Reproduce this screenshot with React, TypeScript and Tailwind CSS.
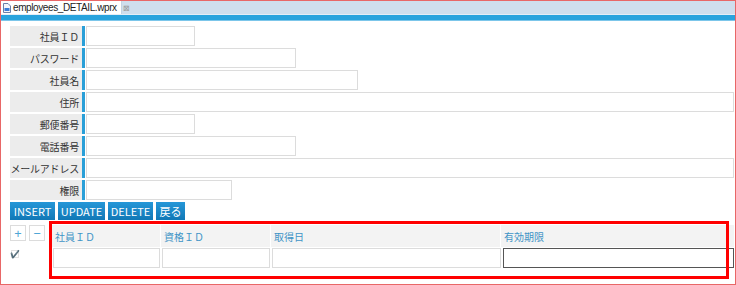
const jp = { fontFamily: '"Noto Sans CJK JP", "Noto Sans", sans-serif' }

const fields = [
  { label: '社員ＩＤ', w: 'w-[109px]' },
  { label: 'パスワード', w: 'w-[210px]' },
  { label: '社員名', w: 'w-[272px]' },
  { label: '住所', w: 'flex-1' },
  { label: '郵便番号', w: 'w-[109px]' },
  { label: '電話番号', w: 'w-[210px]' },
  { label: 'メールアドレス', w: 'flex-1' },
  { label: '権限', w: 'w-[146px]' },
]

function Field({ label, w }: { label: string; w: string }) {
  return (
    <div className="flex h-[20px]">
      <div className="w-[72px] bg-[#ececec] flex items-center justify-end pr-[3px] text-[10px] text-[#333] whitespace-nowrap tracking-[-0.2px]" style={jp}>
        {label}
      </div>
      <div className="w-[3px] bg-[#2a9fd8]" />
      <div className={`${w} ml-[1px] border border-[#dcdcdc] bg-white`} />
    </div>
  )
}

function Btn({ children, w }: { children: string; w: string }) {
  return (
    <div className={`${w} h-[18px] bg-gradient-to-b from-[#2597d8] to-[#1178b6] text-white text-[11px] flex items-center justify-center`} style={jp}>
      {children}
    </div>
  )
}

export default function App() {
  return (
    <div className="relative w-[736px] h-[285px] border border-[#e86767] bg-white overflow-hidden">
      <div className="flex h-[13px] bg-[#cfdeed]">
        <div className="w-[121px] bg-white flex items-center pl-[2px] border-r border-[#c4d3e2]">
          <svg width="8" height="10" viewBox="0 0 8 10" className="mr-[2px] shrink-0">
            <path d="M0.5 0.5h4.5l2.5 2.5v6.5h-7z" fill="#f4f6fb" stroke="#6b7fa8" />
            <rect x="1.5" y="5" width="5" height="3" fill="#3b7dd8" />
          </svg>
          <span className="text-[10px] text-[#222] leading-none whitespace-nowrap tracking-[-0.4px]" style={{ fontFamily: '"Liberation Sans", sans-serif' }}>
            employees_DETAIL.wprx
          </span>
          <span className="ml-[6px] text-[8px] text-[#999] leading-none">⊠</span>
        </div>
      </div>
      <div className="h-[1px] bg-[#e4edf6]" />
      <div className="h-[6px] bg-[#29a3dd] border-b border-[#7cc6ea]" />

      <div className="pl-[9px] pr-[1px] pt-[5px] flex flex-col gap-[2px]">
        {fields.map((f) => (
          <Field key={f.label} label={f.label} w={f.w} />
        ))}
        <div className="flex gap-[3px]">
          <Btn w="w-[45px]">INSERT</Btn>
          <Btn w="w-[47px]">UPDATE</Btn>
          <Btn w="w-[45px]">DELETE</Btn>
          <Btn w="w-[29px]">戻る</Btn>
        </div>
      </div>

      <div className="flex pl-[9px] pt-[5px]">
        <div className="w-[42px] flex flex-col">
          <div className="flex gap-[3px]">
            <div className="w-[16px] h-[16px] border border-[#dcdcdc] text-[#4fa6d6] text-[13px] flex items-center justify-center leading-none">+</div>
            <div className="w-[16px] h-[16px] border border-[#dcdcdc] text-[#4fa6d6] text-[13px] flex items-center justify-center leading-none">−</div>
          </div>
          <div className="mt-[9px] ml-[1px] w-[8px] h-[8px] border border-[#e2e2e2] text-[8px] leading-none text-[#111] flex items-center justify-center">✔</div>
        </div>
        <div className="flex flex-col">
          <div className="flex h-[22px] bg-[#f3f3f3] text-[10px] text-[#3f93c6]" style={jp}>
            <div className="w-[109px] pl-[3px] flex items-center border-r border-white">社員ＩＤ</div>
            <div className="w-[110px] pl-[3px] flex items-center border-r border-white">資格ＩＤ</div>
            <div className="w-[230px] pl-[3px] flex items-center border-r border-white">取得日</div>
            <div className="w-[221px] pl-[3px] flex items-center">有効期限</div>
          </div>
          <div className="flex h-[21px] gap-[2px] pt-[1px] pl-[1px]">
            <div className="w-[107px] border border-[#dcdcdc]" />
            <div className="w-[108px] border border-[#dcdcdc]" />
            <div className="w-[229px] border border-[#dcdcdc]" />
            <div className="w-[231px] border border-[#555]" />
          </div>
        </div>
      </div>

      <div className="absolute left-[48px] top-[220px] w-[680px] h-[58px] border-[3px] border-[#f00]" />
    </div>
  )
}
